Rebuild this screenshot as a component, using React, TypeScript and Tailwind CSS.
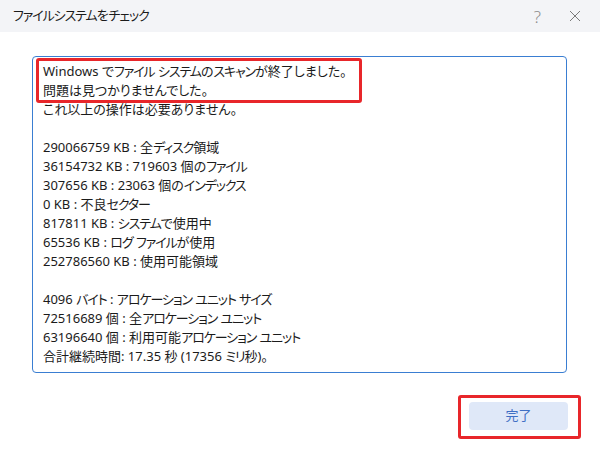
import React from "react";

const lines = [
  "Windows でファイル システムのスキャンが終了しました。",
  "問題は見つかりませんでした。",
  "これ以上の操作は必要ありません。",
  "",
  "290066759 KB : 全ディスク領域",
  "36154732 KB : 719603 個のファイル",
  "307656 KB : 23063 個のインデックス",
  "0 KB : 不良セクター",
  "817811 KB : システムで使用中",
  "65536 KB : ログ ファイルが使用",
  "252786560 KB : 使用可能領域",
  "",
  "4096 バイト : アロケーション ユニット サイズ",
  "72516689 個 : 全アロケーション ユニット",
  "63196640 個 : 利用可能アロケーション ユニット",
  "合計継続時間: 17.35 秒 (17356 ミリ秒)。",
];

// katakana in the UI font is narrower than Noto's, so tighten those runs a bit
function Jp({ text }: { text: string }) {
  const runs: { kata: boolean; s: string }[] = [];
  for (const ch of text) {
    const kata = /[\u30a0-\u30ff]/.test(ch);
    const last = runs[runs.length - 1];
    if (last && last.kata === kata) last.s += ch;
    else runs.push({ kata, s: ch });
  }
  return (
    <>
      {runs.map((r, i) =>
        r.kata ? (
          <span key={i} className="tracking-[-1.1px]">
            {r.s}
          </span>
        ) : (
          <span key={i}>{r.s}</span>
        )
      )}
    </>
  );
}

export default function App() {
  return (
    <div className="w-[600px] h-[450px] bg-white flex flex-col text-[#1b1b1b] font-['Noto_Sans','Noto_Sans_CJK_JP',sans-serif] [font-feature-settings:'palt']">
      <header className="h-[32px] bg-[#f3f4f7] flex items-center pl-[13px] pr-[19px]">
        <span className="text-[13px] flex-1">
          <Jp text="ファイルシステムをチェック" />
        </span>
        <span className="text-[17px] font-light text-[#8b8b8b] mr-[28px] leading-none">?</span>
        <svg width="12" height="12" viewBox="0 0 12 12" className="text-[#7a7a7a]">
          <path d="M1 1L11 11M11 1L1 11" stroke="currentColor" strokeWidth="1" />
        </svg>
      </header>

      <div className="px-[32px] pt-[24px]">
        <div className="relative h-[317px] w-[535px] border border-[#3a7ed2] rounded-[4px] pl-[10px] pt-[5px]">
          {lines.map((l, i) => (
            <div key={i} className="text-[13px] leading-[19px] h-[19px] whitespace-pre">
              <Jp text={l} />
            </div>
          ))}
          <div className="absolute left-[3px] top-[1px] w-[326px] h-[45px] border-[3px] border-[#e8262a] rounded-[3px]" />
        </div>
      </div>

      <div className="flex justify-end pr-[32px] pt-[29px]">
        <div className="relative">
          <button className="w-[99px] h-[28px] rounded-[4px] bg-[#dfe8f8] text-[#3f6fc4] text-[13px]">
            完了
          </button>
          <div className="absolute -left-[11px] -top-[7px] -right-[13px] -bottom-[9px] border-[3px] border-[#e8262a] rounded-[3px]" />
        </div>
      </div>
    </div>
  );
}
